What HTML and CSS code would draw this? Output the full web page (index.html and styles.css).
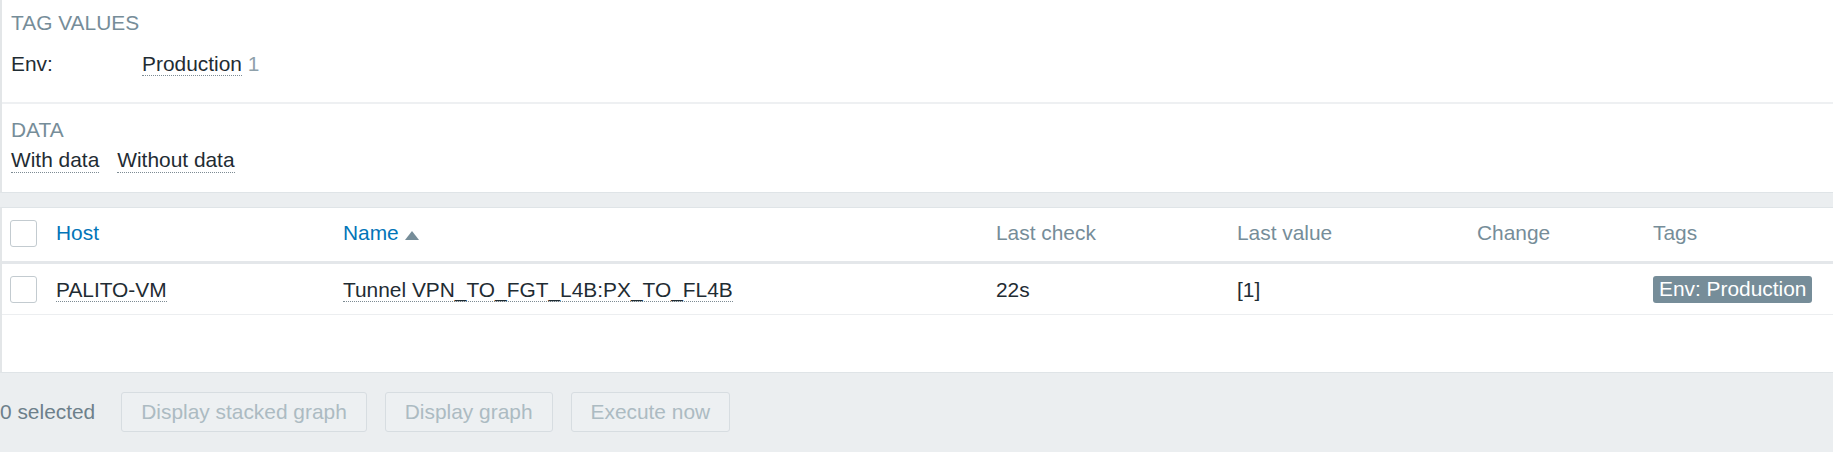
FILE: index.html
```html
<!DOCTYPE html>
<html lang="en">
<head>
<meta charset="utf-8">
<title>Latest data</title>
<link rel="stylesheet" href="styles.css">
</head>
<body>
<div class="filter">
  <div class="fsection">
    <div class="fhead">TAG VALUES</div>
    <div class="tagrow">
      <span class="tagname">Env:</span>
      <span class="tagvals"><span class="link-alt">Production</span> <span class="count">1</span></span>
    </div>
  </div>
  <div class="fsection fsection-data">
    <div class="fhead">DATA</div>
    <div class="datarow">
      <span class="link-alt">With data</span>
      <span class="link-alt">Without data</span>
    </div>
  </div>
</div>

<div class="tablebox">
  <table class="list">
    <colgroup>
      <col class="c-cb"><col class="c-host"><col class="c-name"><col class="c-check"><col class="c-value"><col class="c-change"><col class="c-tags">
    </colgroup>
    <thead>
      <tr>
        <th class="cb"><span class="checkbox"></span></th>
        <th><span class="sortlink">Host</span></th>
        <th><span class="sortlink">Name</span><svg class="arrow" width="14" height="9" viewBox="0 0 14 9"><path d="M7 0 L14 9 L0 9 Z" fill="#768d99"/></svg></th>
        <th>Last check</th>
        <th>Last value</th>
        <th>Change</th>
        <th>Tags</th>
      </tr>
    </thead>
    <tbody>
      <tr>
        <td class="cb"><span class="checkbox"></span></td>
        <td><span class="link-alt">PALITO-VM</span></td>
        <td><span class="link-alt">Tunnel VPN_TO_FGT_L4B:PX_TO_FL4B</span></td>
        <td>22s</td>
        <td>[1]</td>
        <td></td>
        <td class="tagcell"><span class="badge">Env: Production</span></td>
      </tr>
    </tbody>
  </table>
</div>

<div class="footer">
  <span class="selected">0 selected</span>
  <div class="buttons">
    <button class="btn" disabled>Display stacked graph</button>
    <button class="btn" disabled>Display graph</button>
    <button class="btn" disabled>Execute now</button>
  </div>
</div>
</body>
</html>
```

FILE: styles.css
```css
html, body {
  margin: 0;
  padding: 0;
}
body {
  width: 1833px;
  height: 452px;
  overflow: hidden;
  background: #ebeef0;
  font-family: "Liberation Sans", Arial, sans-serif;
  font-size: 20.9px;
  line-height: 24px;
  color: #1f2c33;
}

.filter {
  background: #fff;
  border-left: 2px solid #e3e6e8;
  border-bottom: 1px solid #dfe4e7;
}
.fsection {
  padding: 11px 0 26px 9px;
  border-bottom: 2px solid #eef0f2;
}
.fsection-data {
  padding: 14px 0 19px 9px;
  border-bottom: none;
}
.fhead {
  color: #768d99;
  line-height: 24px;
}
.tagrow {
  display: flex;
  margin-top: 17px;
}
.tagname {
  width: 131px;
}
.count {
  color: #8fa1ab;
}
.datarow {
  display: flex;
  gap: 18px;
  margin-top: 6px;
}
.link-alt {
  border-bottom: 1px dotted #7d8b93;
}

.tablebox {
  margin-top: 14px;
  background: #fff;
  border-left: 2px solid #e3e6e8;
  border-top: 1px solid #dfe4e7;
  border-bottom: 1px solid #dfe4e7;
  padding-bottom: 57px;
}
.list {
  width: 100%;
  border-collapse: collapse;
  table-layout: fixed;
}
.c-cb { width: 54px; }
.c-host { width: 287px; }
.c-name { width: 653px; }
.c-check { width: 241px; }
.c-value { width: 240px; }
.c-change { width: 176px; }
.c-tags { width: auto; }

.list th {
  text-align: left;
  font-weight: normal;
  color: #768d99;
  padding: 13px 0 16px 0;
  border-bottom: 3px solid #e4e7ea;
  vertical-align: top;
  white-space: nowrap;
}
.list td {
  padding: 14px 0 12px 0;
  border-bottom: 1px solid #eceef0;
  vertical-align: top;
  white-space: nowrap;
}
.list th.cb {
  padding: 12px 0 14px 8px;
}
.list td.cb {
  padding: 12px 0 11px 8px;
}
.list td.tagcell {
  padding: 12px 0 11px 0;
}
.checkbox {
  display: block;
  width: 25px;
  height: 25px;
  border: 1px solid #c3cbd0;
  border-radius: 3px;
  background: #fff;
}
.sortlink {
  color: #0275b8;
}
.arrow {
  margin-left: 6px;
  vertical-align: 0;
}
.badge {
  display: inline-block;
  height: 27px;
  line-height: 26px;
  padding: 0 6px;
  border-radius: 3px;
  background: #768d99;
  color: #fff;
}

.footer {
  display: flex;
  align-items: center;
  padding-top: 19px;
}
.selected {
  color: #6d808b;
  margin-right: 26px;
}
.buttons {
  display: flex;
  gap: 18px;
}
.btn {
  height: 40px;
  padding: 0 19px;
  border: 1px solid #d7dde1;
  border-radius: 3px;
  background: #edf0f2;
  color: #acbbc2;
  font-family: "Liberation Sans", Arial, sans-serif;
  font-size: 20.9px;
  line-height: 38px;
}
```
